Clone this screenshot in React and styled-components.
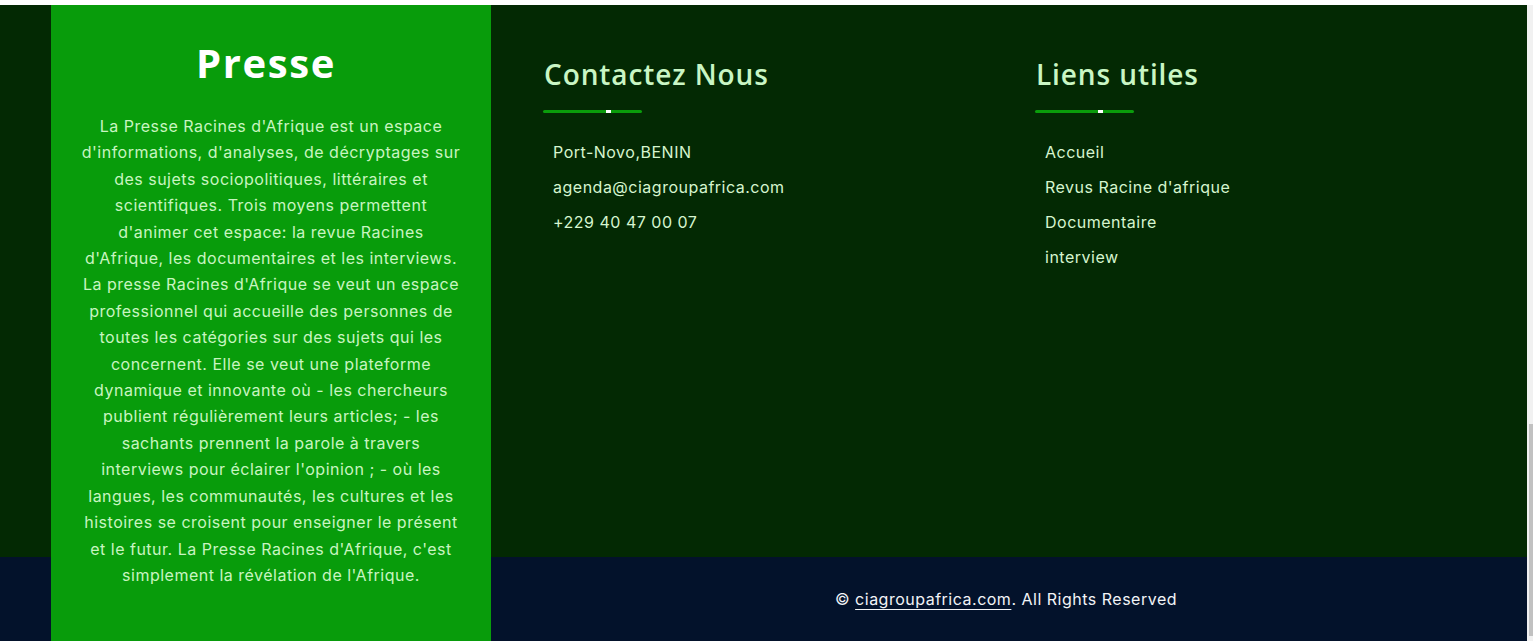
import React from "react";
import styled, { createGlobalStyle } from "styled-components";

const GlobalStyle = createGlobalStyle`
  html, body {
    margin: 0;
    padding: 0;
    background: #ffffff;
  }
  * {
    box-sizing: border-box;
  }
`;

const contacts = ["Port-Novo,BENIN", "agenda@ciagroupafrica.com", "+229 40 47 00 07"];
const liens = ["Accueil", "Revus Racine d'afrique", "Documentaire", "interview"];

const presseTexte =
  "La Presse Racines d'Afrique est un espace d'informations, d'analyses, de décryptages sur des sujets sociopolitiques, littéraires et scientifiques. Trois moyens permettent d'animer cet espace: la revue Racines d'Afrique, les documentaires et les interviews. La presse Racines d'Afrique se veut un espace professionnel qui accueille des personnes de toutes les catégories sur des sujets qui les concernent. Elle se veut une plateforme dynamique et innovante où - les chercheurs publient régulièrement leurs articles; - les sachants prennent la parole à travers interviews pour éclairer l'opinion ; - où les langues, les communautés, les cultures et les histoires se croisent pour enseigner le présent et le futur. La Presse Racines d'Afrique, c'est simplement la révélation de l'Afrique.";

export default function App() {
  return (
    <>
      <GlobalStyle />
      <TopStrip />
      <Footer>
        <PresseCol>
          <PresseTitre>Presse</PresseTitre>
          <PresseTexte>{presseTexte}</PresseTexte>
        </PresseCol>
        <Colonnes>
          <Colonne>
            <ColTitre>Contactez Nous</ColTitre>
            <Barre />
            <Liste>
              {contacts.map((c) => (
                <Item key={c}>{c}</Item>
              ))}
            </Liste>
          </Colonne>
          <Colonne>
            <ColTitre>Liens utiles</ColTitre>
            <Barre />
            <Liste>
              {liens.map((l) => (
                <Item key={l}>
                  <Lien href="#">{l}</Lien>
                </Item>
              ))}
            </Liste>
          </Colonne>
        </Colonnes>
        <Copyright>
          © <CopyLien href="#">ciagroupafrica.com</CopyLien>. All Rights Reserved
        </Copyright>
        <Scrollbar>
          <Thumb />
        </Scrollbar>
      </Footer>
    </>
  );
}

const TopStrip = styled.div`
  height: 5px;
  background: #ffffff;
`;

const Footer = styled.footer`
  display: grid;
  grid-template-columns: 51px 440px 1fr 6px;
  grid-template-rows: 552px 84px;
  background: linear-gradient(to bottom, #032903 552px, #03122b 552px);
  font-family: "Inter", "Roboto", sans-serif;
  letter-spacing: 0.5px;
`;

const PresseCol = styled.section`
  grid-column: 2;
  grid-row: 1 / 3;
  background: #089c0b;
  padding: 31px 30px 0 30px;
  text-align: center;
`;

const PresseTitre = styled.h2`
  margin: 0 10px 23px 0;
  font-family: "Open Sans", sans-serif;
  font-weight: 700;
  font-size: 40px;
  letter-spacing: 1.6px;
  line-height: 54px;
  color: #ffffff;
`;

const PresseTexte = styled.p`
  margin: 0;
  font-size: 16px;
  line-height: 26.4px;
  color: #c8f5c1;
`;

const Colonnes = styled.div`
  grid-column: 3;
  grid-row: 1;
  display: grid;
  grid-template-columns: 1fr 1fr;
  padding: 49px 0 0 52px;
`;

const Colonne = styled.div`
  display: flex;
  flex-direction: column;
  align-items: flex-start;
`;

const ColTitre = styled.h3`
  margin: 0 0 0 1px;
  font-family: "Open Sans", sans-serif;
  font-weight: 600;
  font-size: 28px;
  letter-spacing: 0.9px;
  line-height: 40px;
  color: #c9f6c4;
`;

const Barre = styled.div`
  position: relative;
  margin-top: 16px;
  width: 99px;
  height: 3px;
  border-radius: 2px;
  background: #0a9c0b;

  &::after {
    content: "";
    position: absolute;
    left: 63px;
    top: 0;
    width: 5px;
    height: 3px;
    background: #ffffff;
  }
`;

const Liste = styled.ul`
  list-style: none;
  margin: 29px 0 0 0;
  padding: 0 0 0 10px;
  display: flex;
  flex-direction: column;
  gap: 14px;
`;

const Item = styled.li`
  font-size: 16px;
  line-height: 21px;
  color: #d6f5cf;
`;

const Lien = styled.a`
  color: inherit;
  text-decoration: none;
`;

const Copyright = styled.div`
  grid-column: 3;
  grid-row: 2;
  display: flex;
  align-items: center;
  justify-content: center;
  padding: 0 6px 1px 0;
  font-size: 16px;
  color: #f2f4f7;
`;

const CopyLien = styled.a`
  color: inherit;
  margin: 0 0 0 5px;
  text-decoration: underline;
  text-underline-offset: 4px;
  text-decoration-thickness: 1px;
`;

const Scrollbar = styled.div`
  grid-column: 4;
  grid-row: 1 / 3;
  display: flex;
  flex-direction: column;
  justify-content: flex-end;
  background: #f1f1f1;
  padding-bottom: 5px;
`;

const Thumb = styled.div`
  height: 212px;
  margin-left: 2px;
  background: #c1c1c1;
`;
